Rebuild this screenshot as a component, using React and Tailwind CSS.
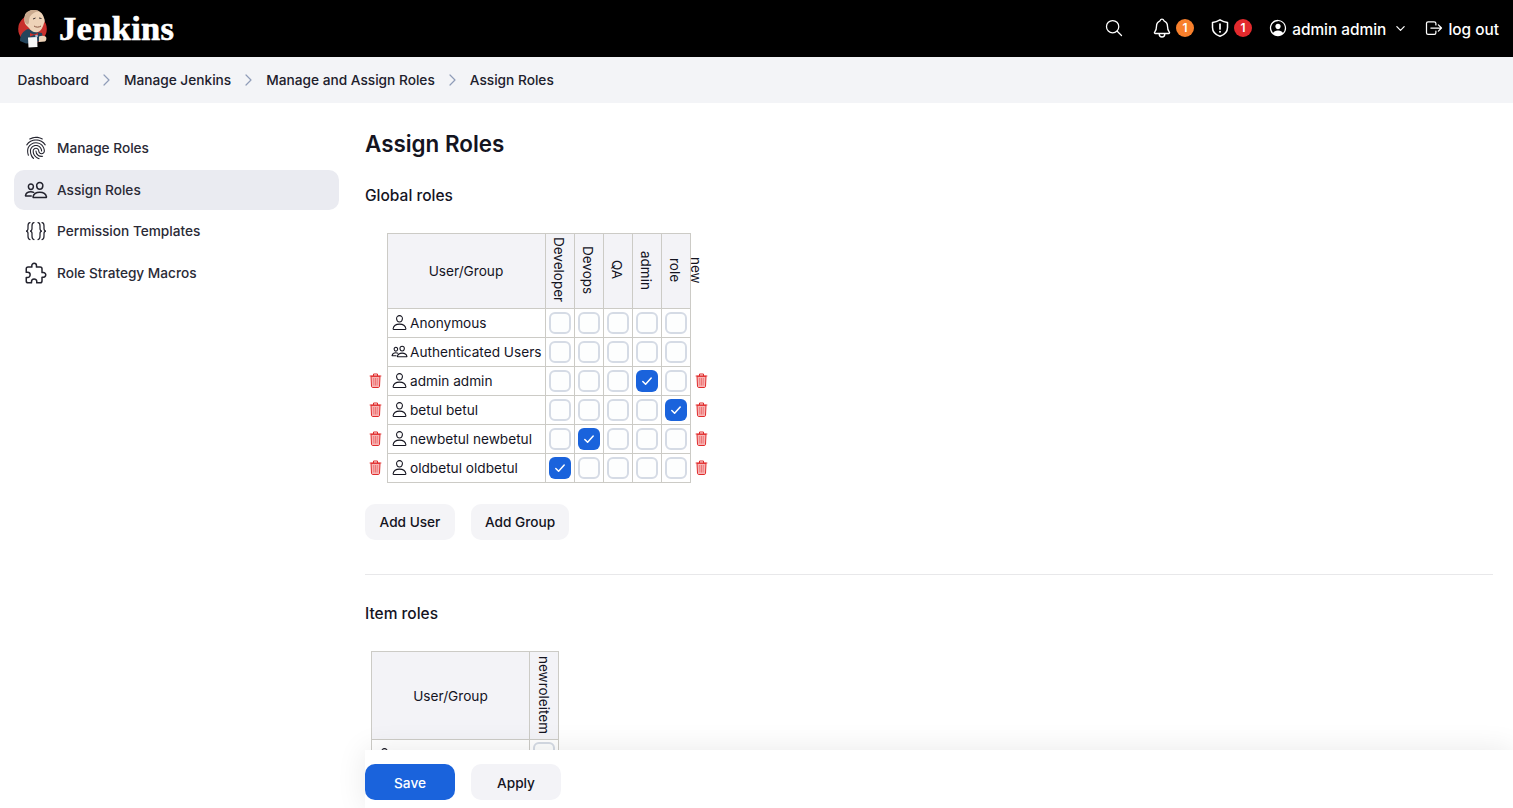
import React from "react";
import {
  IoSearchOutline, IoNotificationsOutline, IoPersonCircleOutline, IoLogOutOutline,
  IoChevronDownOutline, IoFingerPrintOutline, IoPeopleOutline,
  IoExtensionPuzzleOutline, IoPersonOutline,
} from "react-icons/io5";

const Logo = () => (
  <svg width="30" height="38" viewBox="18 10 30 38" className="shrink-0">
    <circle cx="32.500" cy="29" r="14.300" fill="#c8302c" />
    <path d="M20 41c0-6 3-10 8-12l8 3 6 1 1 5-3 3-6 2-8 .5z" fill="#24455c" />
    <path d="M25 15c1-3 5-5 9-5 5 0 9 3 10 8 1 2 1 4 0 5-1 4-3 8-6 9-4 1-7-1-9-4-1-1-2-2-3-3-2-2-2-6-1-10z" fill="#eed3b8" />
    <path d="M25 15c1-3 5-5 9-5 2 0 4 .5 5 1.500-4 0-7 2-9 5-1 2-1 4-1 6l-1 2c-4-1-4-6-3-9.500z" fill="#c9a98e" />
    <path d="M33 19l2.500-1M39 18l2.500.5" stroke="#3a3030" strokeWidth="1" />
    <path d="M34 26c2 1.500 5 1.500 7 0" stroke="#8b5a46" strokeWidth="1" fill="none" />
    <path d="M30 33l4 1.500 4-1.500v3.500l-4-1.500-4 1.500z" fill="#c8302c" />
    <path d="M28 37.500l9-.5.500 10-9 .5z" fill="#f6f6f6" />
    <path d="M39 36.500c2-1 5-1 6.500 0s1 4-.5 5l-6 .5z" fill="#eed3b8" />
    <circle cx="36.500" cy="36" r="1.300" fill="#9fc0d6" />
  </svg>
);

const Shield = () => (
  <svg width="20" height="20" viewBox="0 0 20 20" className="ml-[16px] shrink-0">
    <path d="M10 1.800c2.600 1.500 5 2.300 7.500 2.600v5c0 4.500-3.200 7.300-7.500 8.800-4.300-1.500-7.500-4.300-7.500-8.800v-5C5 4.100 7.400 3.300 10 1.800z" fill="none" stroke="#fff" strokeWidth="1.500" strokeLinejoin="round" />
    <path d="M10 6v5" stroke="#fff" strokeWidth="1.700" strokeLinecap="round" />
    <circle cx="10" cy="13.700" r="1" fill="#fff" />
  </svg>
);

const Braces = () => (
  <svg width="22" height="22" viewBox="0 0 22 22" fill="none" stroke="currentColor" strokeWidth="1.250" strokeLinecap="round">
    <path d="M5 2.500C3 2.500 3 4 3 6v2.500C3 10 2.300 11 1 11c1.300 0 2 1 2 2.500V16c0 2 0 3.500 2 3.500" />
    <path d="M9 2.500C7 2.500 7 4 7 6v2.500C7 10 6.300 11 5 11c1.300 0 2 1 2 2.500V16c0 2 0 3.500 2 3.500" />
    <path d="M13 2.500c2 0 2 1.500 2 3.500v2.500c0 1.500.7 2.500 2 2.500-1.300 0-2 1-2 2.500V16c0 2 0 3.500-2 3.500" />
    <path d="M17 2.500c2 0 2 1.500 2 3.500v2.500c0 1.500.7 2.500 2 2.500-1.300 0-2 1-2 2.500V16c0 2 0 3.500-2 3.500" />
  </svg>
);

const Chevron = () => (
  <svg width="7" height="12" viewBox="0 0 7 12" className="mx-[14px] shrink-0">
    <path d="M1 1l5 5-5 5" fill="none" stroke="#8f9cb8" strokeWidth="1.200" strokeLinecap="round" strokeLinejoin="round" />
  </svg>
);

const Trash = () => (
  <svg width="13" height="15" viewBox="0 0 13 15" className="block">
    <path d="M2 3.300l.5 10c0 .6.500 1.200 1 1.200h6c.5 0 1-.6 1-1.200l.5-10z" fill="#f7b5b5" stroke="#e02b2b" strokeWidth="1" />
    <path d="M.7 3h11.600M4.500 3V1h4v2" fill="none" stroke="#e02b2b" strokeWidth="1" />
    <path d="M4.700 5l.2 7.500M6.500 5v7.500M8.300 5l-.2 7.500" stroke="#ea5a5a" strokeWidth="0.700" />
  </svg>
);

const Check = ({ on }) => (
  <span className={on
    ? "flex h-[22px] w-[22px] items-center justify-center rounded-[6px] bg-[#1a63dc]"
    : "block h-[22px] w-[22px] rounded-[6px] border-2 border-[#d5dbe5] bg-[#fdfefe]"}>
    {on && (
      <svg width="12" height="12" viewBox="0 0 12 12">
        <path d="M1.800 6.500l2.800 2.800 5.600-6.300" fill="none" stroke="#fff" strokeWidth="1.500" strokeLinecap="round" strokeLinejoin="round" />
      </svg>
    )}
  </span>
);

const cell = "border border-[#cccbc6] p-0";

const RoleTh = ({ children }) => (
  <th className={`${cell} w-[29px] bg-[#f3f3f7] font-normal`}>
    <span className="mx-auto flex w-[27px] items-center justify-center pb-[2px] text-[13.500px] leading-[18px] [writing-mode:vertical-rl]">{children}</span>
  </th>
);

const globalRoles = ["Developer", "Devops", "QA", "admin", "role"];
const rows = [
  { name: "Anonymous", on: -1 },
  { name: "Authenticated Users", on: -1, group: true },
  { name: "admin admin", on: 3, del: true },
  { name: "betul betul", on: 4, del: true },
  { name: "newbetul newbetul", on: 1, del: true },
  { name: "oldbetul oldbetul", on: 0, del: true },
];

const NavItem = ({ icon, label, active, gap }) => (
  <div className={`${gap} flex h-10 items-center gap-[9px] rounded-[10px] pl-[10px] text-[13.650px] font-medium text-[#2a2a36] ${active ? "bg-[#eaebf1]" : ""}`}>
    <span className="flex w-6 justify-center text-[24px] text-[#23232e]">{icon}</span>
    {label}
  </div>
);

const Crumb = ({ children, last }) => (
  <>
    <span>{children}</span>
    {!last && <Chevron />}
  </>
);

export default function App() {
  return (
    <div className="relative h-[808px] w-[1513px] overflow-hidden bg-white font-['Inter',sans-serif] text-[#14141f]">
      <header className="flex h-[57px] items-center bg-black pl-[18px] pr-[14px] text-white">
        <Logo />
        <span className="ml-[11px] font-['Liberation_Serif',serif] text-[34.500px] font-bold leading-none tracking-[0.300px] [-webkit-text-stroke:0.6px_white]">Jenkins</span>
        <div className="ml-auto flex items-center text-[15.400px] font-medium">
          <IoSearchOutline className="h-[20px] w-[20px]" />
          <IoNotificationsOutline className="ml-[27px] h-[22px] w-[22px]" />
          <span className="ml-[3px] flex h-[18px] w-[18px] items-center justify-center rounded-full bg-[#f8802c] text-[12px] font-semibold">1</span>
          <Shield />
          <span className="ml-[4px] flex h-[18px] w-[18px] items-center justify-center rounded-full bg-[#e32a2d] text-[12px] font-semibold">1</span>
          <IoPersonCircleOutline className="ml-[16px] h-[20px] w-[20px]" />
          <span className="ml-[4px] pt-[2px]">admin admin</span>
          <IoChevronDownOutline className="ml-[8px] h-[13px] w-[13px]" />
          <IoLogOutOutline className="ml-[17px] h-[20px] w-[20px]" />
          <span className="ml-[4px] pt-[2px]">log out</span>
        </div>
      </header>

      <nav className="flex h-[46px] items-center bg-[#f3f4f7] pl-[17.500px] text-[13.700px] font-medium text-[#20202c]">
        <Crumb>Dashboard</Crumb>
        <Crumb>Manage Jenkins</Crumb>
        <Crumb>Manage and Assign Roles</Crumb>
        <Crumb last>Assign Roles</Crumb>
      </nav>

      <div className="flex">
        <aside className="ml-[14px] mt-[25px] w-[325px] shrink-0">
          <NavItem gap="mb-[2px]" icon={<IoFingerPrintOutline />} label="Manage Roles" />
          <NavItem gap="mb-[1px]" icon={<IoPeopleOutline />} label="Assign Roles" active />
          <NavItem gap="mb-[2px]" icon={<Braces />} label="Permission Templates" />
          <NavItem gap="" icon={<IoExtensionPuzzleOutline />} label="Role Strategy Macros" />
        </aside>

        <main className="ml-[26px] w-[1128px]">
          <h1 className="mt-[25px] text-[22.400px] font-semibold leading-[32px]">Assign Roles</h1>
          <h2 className="mt-[24px] text-[15.500px] font-medium leading-[24px]">Global roles</h2>

          <table className="mt-[25px] border-collapse text-[13.650px]">
            <thead>
              <tr className="h-[75px]">
                <th className="w-[22px] p-0" />
                <th className={`${cell} w-[158px] bg-[#f3f3f7] font-normal`}>User/Group</th>
                {globalRoles.map((r) => <RoleTh key={r}>{r}</RoleTh>)}
                <th className="w-[22px] p-0 font-normal">
                  <span className="flex items-center pb-[2px] text-[13.500px] leading-[10px] [writing-mode:vertical-rl]">new</span>
                </th>
              </tr>
            </thead>
            <tbody>
              {rows.map((row) => (
                <tr key={row.name} className="h-[29px]">
                  <td className="p-0 pb-[2px]">{row.del && <span className="flex justify-center"><Trash /></span>}</td>
                  <td className={`${cell} pl-[3.500px]`}>
                    <span className="flex items-center gap-[2px] whitespace-nowrap">
                      {row.group ? <IoPeopleOutline className="h-[17px] w-[17px]" /> : <IoPersonOutline className="h-[17px] w-[17px]" />}
                      {row.name}
                    </span>
                  </td>
                  {globalRoles.map((r, i) => (
                    <td key={r} className={cell}>
                      <span className="flex justify-center"><Check on={row.on === i} /></span>
                    </td>
                  ))}
                  <td className="p-0 pb-[2px]">{row.del && <span className="flex justify-center"><Trash /></span>}</td>
                </tr>
              ))}
            </tbody>
          </table>

          <div className="mt-[21px] flex gap-4">
            <button className="h-9 w-[90px] rounded-[10px] bg-[#f4f4f7] text-[13.650px] font-[450]">Add User</button>
            <button className="h-9 w-[98px] rounded-[10px] bg-[#f4f4f7] text-[13.650px] font-[450]">Add Group</button>
          </div>

          <hr className="mt-[34px] border-0 border-t border-[#e8e8ea]" />

          <h2 className="mt-[27px] text-[15.500px] font-medium leading-[24px]">Item roles</h2>

          <table className="ml-[6px] mt-[25px] border-collapse text-[13.650px]">
            <thead>
              <tr className="h-[88px]">
                <th className={`${cell} w-[158px] bg-[#f3f3f7] pt-[2px] font-normal`}>User/Group</th>
                <RoleTh>newroleitem</RoleTh>
              </tr>
            </thead>
            <tbody>
              <tr>
                <td className={`${cell} pl-[3.500px] pt-[5px]`}>
                  <span className="flex items-center gap-[2px]"><IoPersonOutline className="h-[17px] w-[17px]" />Anonymous</span>
                </td>
                <td className={`${cell} align-top pt-[2px]`}><span className="flex justify-center"><Check /></span></td>
              </tr>
            </tbody>
          </table>
        </main>
      </div>

      <div className="absolute bottom-0 left-[365px] right-0 h-[58px] bg-white shadow-[0_0_30px_rgba(0,0,0,0.09)]">
        <div className="mt-[14px] flex gap-4">
          <button className="h-9 w-[90px] rounded-[10px] bg-[#1a63dc] pt-[2px] text-[13.650px] font-medium text-white">Save</button>
          <button className="h-9 w-[90px] rounded-[10px] bg-[#f3f3f7] pt-[2px] text-[13.650px] font-[450]">Apply</button>
        </div>
      </div>
    </div>
  );
}
